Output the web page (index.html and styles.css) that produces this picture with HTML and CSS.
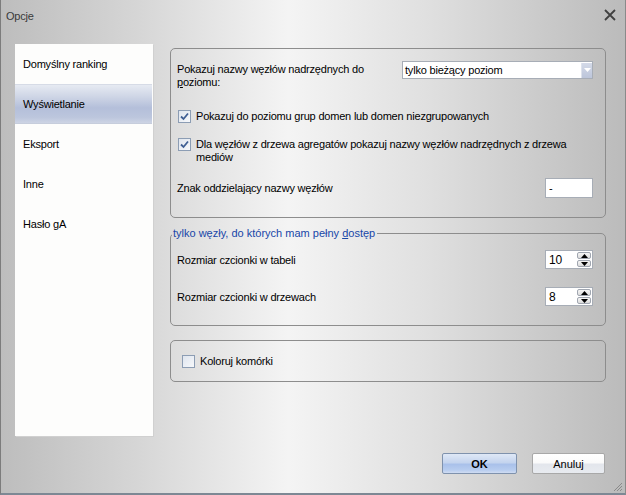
FILE: index.html
```html
<!DOCTYPE html>
<html lang="pl">
<head>
<meta charset="utf-8">
<title>Opcje</title>
<link rel="stylesheet" href="styles.css">
</head>
<body>
<div class="window">
  <div class="titlebar">
    <span class="title">Opcje</span>
    <span class="close">
      <svg width="12" height="12" viewBox="0 0 12 12"><path d="M1 1 L11 11 M11 1 L1 11" stroke="#404040" stroke-width="1.8" fill="none"/></svg>
    </span>
  </div>
  <div class="content">
    <ul class="sidebar">
      <li class="item">Domyślny ranking</li>
      <li class="item selected">Wyświetlanie</li>
      <li class="item">Eksport</li>
      <li class="item">Inne</li>
      <li class="item">Hasło gA</li>
    </ul>
    <div class="main">
      <section class="group g1">
        <div class="row-combo">
          <span class="combo-label">Pokazuj nazwy węzłów nadrzędnych do <u>p</u>oziomu:</span>
          <div class="combo">
            <span class="combo-text">tylko bieżący poziom</span>
            <span class="combo-btn"><svg width="7" height="4" viewBox="0 0 7 4"><path d="M0 0 H7 L3.5 4 Z" fill="#ffffff"/></svg></span>
          </div>
        </div>
        <div class="check-row cr1">
          <span class="check checked"><svg width="9" height="9" viewBox="0 0 9 9"><path d="M1 4.5 L3.5 7 L8 1.5" stroke="#3f5f94" stroke-width="1.8" fill="none"/></svg></span>
          <span class="check-text">Pokazuj do poziomu grup domen lub domen niezgrupowanych</span>
        </div>
        <div class="check-row cr2">
          <span class="check checked"><svg width="9" height="9" viewBox="0 0 9 9"><path d="M1 4.5 L3.5 7 L8 1.5" stroke="#3f5f94" stroke-width="1.8" fill="none"/></svg></span>
          <span class="check-text wrap">Dla węzłów z drzewa agregatów pokazuj nazwy węzłów nadrzędnych z drzewa mediów</span>
        </div>
        <div class="field-row fr-sep">
          <span class="field-label">Znak oddzielający nazwy węzłów</span>
          <span class="textbox">-</span>
        </div>
      </section>

      <fieldset class="group g2">
        <legend>tylko węzły, do których mam pełny <u>d</u>ostęp</legend>
        <div class="field-row fr-a">
          <span class="field-label">Rozmiar czcionki w tabeli</span>
          <div class="spinner">
            <span class="spin-val">10</span>
            <span class="spin-btns">
              <span class="spin-btn"><svg width="7" height="4" viewBox="0 0 7 4"><path d="M0 4 H7 L3.5 0 Z" fill="#000"/></svg></span>
              <span class="spin-btn"><svg width="7" height="4" viewBox="0 0 7 4"><path d="M0 0 H7 L3.5 4 Z" fill="#000"/></svg></span>
            </span>
          </div>
        </div>
        <div class="field-row fr-b">
          <span class="field-label">Rozmiar czcionki w drzewach</span>
          <div class="spinner">
            <span class="spin-val">8</span>
            <span class="spin-btns">
              <span class="spin-btn"><svg width="7" height="4" viewBox="0 0 7 4"><path d="M0 4 H7 L3.5 0 Z" fill="#000"/></svg></span>
              <span class="spin-btn"><svg width="7" height="4" viewBox="0 0 7 4"><path d="M0 0 H7 L3.5 4 Z" fill="#000"/></svg></span>
            </span>
          </div>
        </div>
      </fieldset>

      <section class="group g3">
        <div class="check-row">
          <span class="check"></span>
          <span class="check-text">Koloruj komórki</span>
        </div>
      </section>
    </div>
  </div>
  <div class="footer">
    <button class="btn btn-ok">OK</button>
    <button class="btn btn-cancel">Anuluj</button>
  </div>
  <span class="grip">
    <svg width="11" height="11" viewBox="0 0 11 11"><path d="M10 2 L2 10 M10 5 L5 10 M10 8 L8 10" stroke="#8a8a8a" stroke-width="1" fill="none"/></svg>
  </span>
</div>
</body>
</html>
```

FILE: styles.css
```css
* { box-sizing: border-box; }

body {
  margin: 0;
  font-family: "Liberation Sans", Arial, sans-serif;
  font-size: 11px;
  letter-spacing: -0.2px;
  color: #000;
  background: #c0c0c0;
}

.window {
  position: relative;
  width: 626px;
  height: 495px;
  overflow: hidden;
  background: linear-gradient(to right, #bdbdbd 0%, #d6d6d6 22%, #f4f4f4 46%, #e0e0e0 68%, #c4c4c4 92%, #bbbbbb 100%);
  border-left: 1px solid #7c7c7c;
  border-right: 1px solid #8a8a8a;
  border-bottom: 2px solid #7d8894;
  display: flex;
  flex-direction: column;
}

.titlebar {
  height: 30px;
  display: flex;
  align-items: center;
  justify-content: space-between;
  padding: 2px 9px 0 5px;
}

.title {
  color: #3a3a3a;
  font-size: 11px;
}

.close {
  display: flex;
  width: 12px;
  height: 12px;
  margin-top: -3px;
}

.content {
  display: flex;
  padding: 14px 0 0 14px;
  height: 406px;
}

.sidebar {
  list-style: none;
  margin: 0;
  padding: 0;
  width: 138px;
  height: 392px;
  background: #fdfdfc;
  box-shadow: 1px 1px 0 #d0d0d0;
}

.item {
  height: 40px;
  display: flex;
  align-items: center;
  padding-left: 8px;
}

.selected {
  background: linear-gradient(to bottom, #e6eaf2 0%, #cfd6e6 30%, #b4bfda 60%, #bcc6dd 85%, #cdd4e4 100%);
  border-top: 1px solid #d6dbe6;
  border-bottom: 1px solid #c6cddc;
  width: 137px;
}

.main {
  margin-left: 17px;
  width: 436px;
  margin-top: 4px;
  display: flex;
  flex-direction: column;
}

.group {
  border: 1px solid #8d8d8d;
  border-radius: 5px;
  margin: 0;
}

.g1 {
  height: 170px;
  padding: 12px 12px 0 6px;
}

.row-combo {
  display: flex;
  justify-content: space-between;
  align-items: flex-start;
}

.combo-label {
  width: 205px;
  line-height: 13px;
  padding-top: 2px;
}

.combo {
  width: 191px;
  height: 18px;
  background: #fff;
  border: 1px solid #a7adb6;
  display: flex;
  align-items: center;
  justify-content: space-between;
  padding-left: 2px;
}

.combo-btn {
  width: 11px;
  height: 15px;
  background: linear-gradient(to bottom, #d4dae8, #bcc5da);
  border-left: 1px solid #dde2ec;
  display: flex;
  align-items: center;
  justify-content: center;
}

.check-row {
  display: flex;
  align-items: flex-start;
  line-height: 13px;
}

.g1 .check-row { padding-left: 1px; }

.cr1 { margin-top: 21px; }
.cr2 { margin-top: 15px; }

.check {
  flex: none;
  width: 13px;
  height: 13px;
  border: 1px solid #8c9db4;
  background: linear-gradient(135deg, #dfe5ee 0%, #f6f8fb 100%);
  display: flex;
  align-items: center;
  justify-content: center;
  margin-right: 5px;
}

.check-text.wrap { width: 392px; }

.field-row {
  display: flex;
  align-items: center;
  justify-content: space-between;
}

.fr-sep { margin-top: 14px; }

.textbox {
  width: 48px;
  height: 20px;
  background: #fff;
  border: 1px solid #a7adb6;
  padding-left: 3px;
  display: flex;
  align-items: center;
}

.g2 {
  margin-top: 9px;
  height: 99px;
  padding: 10px 12px 0 6px;
}

.g2 legend {
  color: #1846a8;
  line-height: 13px;
  letter-spacing: 0;
  padding: 0 2px 0 1px;
  margin-left: -5px;
}

.fr-b { margin-top: 18px; }

.spinner {
  width: 48px;
  height: 19px;
  background: #fff;
  border: 1px solid #a7adb6;
  display: flex;
  align-items: center;
  justify-content: space-between;
  padding: 0 1px 0 3px;
}

.spin-val { font-size: 12px; }

.spin-btns {
  display: flex;
  flex-direction: column;
  gap: 1px;
}

.spin-btn {
  width: 14px;
  height: 7px;
  border: 1px solid #a0a6b0;
  border-radius: 2px;
  background: linear-gradient(to bottom, #f6f6f6, #dcdcdc);
  display: flex;
  align-items: center;
  justify-content: center;
}

.g3 {
  margin-top: 14px;
  height: 42px;
  padding: 14px 0 0 11px;
}

.footer {
  display: flex;
  justify-content: flex-end;
  gap: 15px;
  padding: 17px 20px 0 0;
}

.btn {
  font-family: "Liberation Sans", Arial, sans-serif;
  font-size: 11px;
  height: 21px;
  padding: 0;
  border-radius: 2px;
  color: #000;
}

.btn-ok {
  width: 75px;
  font-weight: bold;
  border: 1px solid #7f92ad;
  background: linear-gradient(to bottom, #dfe8f6 0%, #c4d4ee 45%, #a9c1ea 55%, #b8cdef 85%, #d0dcf2 100%);
}

.btn-cancel {
  width: 73px;
  border: 1px solid #a8a8a8;
  background: linear-gradient(to bottom, #ffffff 0%, #fafafa 45%, #e3e6ec 55%, #e8ebf0 100%);
}

.grip {
  position: absolute;
  right: 2px;
  bottom: 1px;
  display: flex;
}
```
